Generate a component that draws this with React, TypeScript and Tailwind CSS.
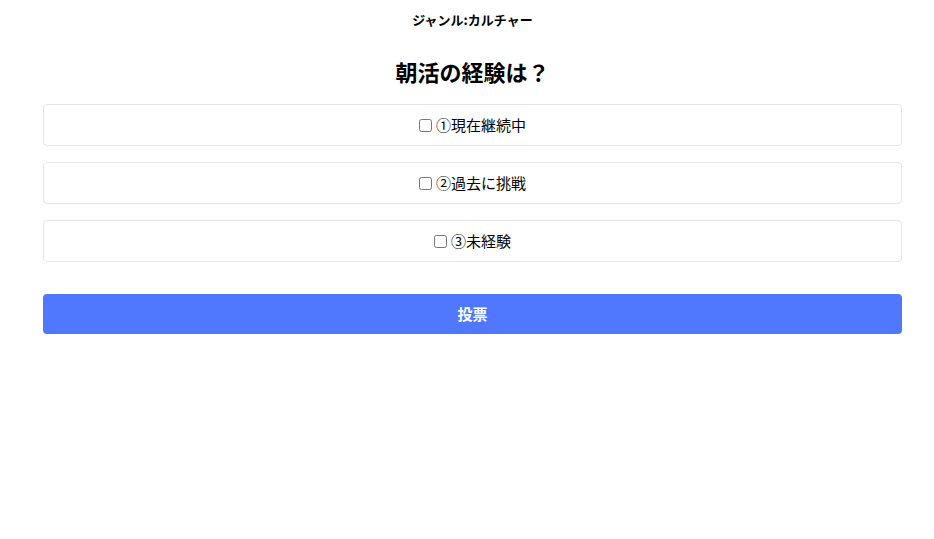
import React from 'react';

const OPTIONS = ['①現在継続中', '②過去に挑戦', '③未経験'];

export default function App() {
  return (
    <div className="min-h-[539px] bg-white text-black font-['Noto_Sans_CJK_JP','Noto_Sans',sans-serif]">
      <div className="ml-[43px] w-[859px] pt-[10px]">
        <p className="text-center text-[13px] font-bold leading-[20px]">ジャンル:カルチャー</p>

        <h1 className="mt-[26px] text-center text-[22px] font-bold leading-[30px]">朝活の経験は？</h1>

        <div className="mt-[18px] flex flex-col gap-[16px]">
          {OPTIONS.map((opt) => (
            <label
              key={opt}
              className="flex h-[42px] items-center justify-center gap-[4px] rounded-[4px] border border-[#e5e5e5] text-[15px]"
            >
              <input type="checkbox" className="h-[13px] w-[13px]" />
              <span>{opt}</span>
            </label>
          ))}
        </div>

        <button className="mt-[32px] h-[40px] w-full rounded-[4px] bg-[#4f78ff] text-[15px] font-bold text-white">
          投票
        </button>
      </div>
    </div>
  );
}
